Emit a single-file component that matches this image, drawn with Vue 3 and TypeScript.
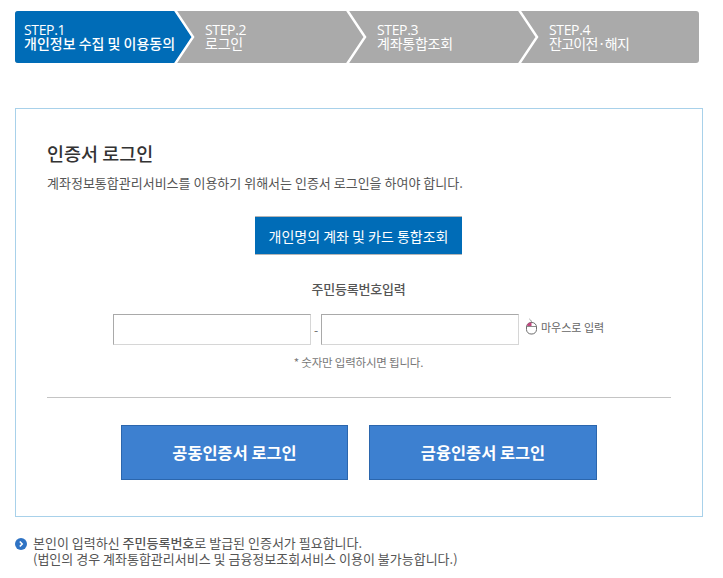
<script setup lang="ts">
interface Step { no: string; label: string; active?: boolean }
const steps: Step[] = [
  { no: 'STEP.1', label: '개인정보 수집 및 이용동의', active: true },
  { no: 'STEP.2', label: '로그인' },
  { no: 'STEP.3', label: '계좌통합조회' },
  { no: 'STEP.4', label: '잔고이전·해지' },
]
</script>

<template>
  <div class="page">
    <div class="steps">
      <div v-for="(s, i) in steps" :key="s.no" class="step" :class="{ active: s.active, first: i === 0, last: i === 3 }">
        <span class="no">{{ s.no }}</span>
        <span class="label">{{ s.label }}</span>
        <svg v-if="i < 3" class="chev" width="20" height="52" viewBox="0 0 20 52">
          <polygon points="0,0 18,26 0,52" :fill="s.active ? '#006cb7' : '#aaaaaa'" />
          <polyline points="0,-1 18,26 0,53" fill="none" stroke="#fff" stroke-width="2.5" />
        </svg>
      </div>
    </div>

    <section class="card">
      <h1 class="title">인증서 로그인</h1>
      <p class="desc">계좌정보통합관리서비스를 이용하기 위해서는 인증서 로그인을 하여야 합니다.</p>
      <div class="center">
        <button type="button" class="personal">개인명의 계좌 및 카드 통합조회</button>
      </div>
      <div class="rrn-title">주민등록번호입력</div>
      <div class="rrn">
        <input class="field" type="text" aria-label="주민등록번호 앞자리" />
        <span class="dash">-</span>
        <input class="field" type="password" aria-label="주민등록번호 뒷자리" />
        <span class="mouse">
          <svg width="13" height="17" viewBox="0 0 13 17">
            <rect x="1.5" y="4.5" width="10" height="11.5" rx="4.5" fill="#fff" stroke="#6e6e6e" />
            <path d="M2 8.5h9" stroke="#6e6e6e" stroke-width="0.8" fill="none" />
            <path d="M2.2 8V7a4 3 0 0 1 4.3-2.5V8z" fill="#c0487f" />
            <path d="M6.5 4.5C6.5 2.8 5.5 2 4.5 1" stroke="#6e6e6e" stroke-width="0.8" fill="none" />
          </svg>
          <span>마우스로 입력</span>
        </span>
      </div>
      <p class="hint">* 숫자만 입력하시면 됩니다.</p>
      <hr class="divider" />
      <div class="actions">
        <button type="button" class="login">공동인증서 로그인</button>
        <button type="button" class="login">금융인증서 로그인</button>
      </div>
    </section>

    <div class="note">
      <svg class="bullet" width="12" height="12" viewBox="0 0 12 12">
        <circle cx="6" cy="6" r="6" fill="#2f73c4" />
        <path d="M4.8 3.5 7.2 6 4.8 8.5" fill="none" stroke="#fff" stroke-width="1.6" />
      </svg>
      <p>본인이 입력하신 <b>주민등록번호</b>로 발급된 인증서가 필요합니다.<br />(법인의 경우 계좌통합관리서비스 및 금융정보조회서비스 이용이 불가능합니다.)</p>
    </div>
  </div>
</template>

<style>
html, body { background: #fff; }
</style>

<style scoped>
.page {
  width: 723px;
  height: 578px;
  overflow: hidden;
  box-sizing: border-box;
  padding: 11px 20px 0 15px;
  font-family: "Noto Sans CJK KR", "Noto Sans", sans-serif;
  color: #444;
}
.steps {
  display: flex;
  width: 684px;
  height: 52px;
  background: #aaaaaa;
  border-radius: 3px;
  overflow: hidden;
}
.step {
  position: relative;
  box-sizing: border-box;
  width: 172px;
  padding: 10px 0 0 30px;
  display: flex;
  flex-direction: column;
  color: #fff;
  font-size: 14px;
  line-height: 15px;
  white-space: nowrap;
}
.step.first { width: 160px; padding-left: 9px; background: #006cb7; }
.step.last { flex: 1; }
.step .no { padding-top: 1px; font-family: "Open Sans", sans-serif; font-weight: 400; font-size: 14px; letter-spacing: -0.35px; }
.step .label { margin-top: -1px; font-weight: 400; letter-spacing: -0.25px; }
.step.active .label { font-weight: 500; letter-spacing: 0; }
.step.last .label { letter-spacing: -0.7px; }
.chev {
  position: absolute;
  top: 0;
  left: 100%;
  overflow: visible;
  z-index: 1;
}
.card {
  box-sizing: border-box;
  width: 688px;
  height: 409px;
  margin-top: 45px;
  border: 1px solid #a8d1ea;
  padding: 31px 31px 0;
}
.title {
  margin: 0;
  font-size: 18.5px;
  line-height: 26px;
  font-weight: 500;
  color: #333;
}
.desc {
  margin: 8px 0 0;
  font-size: 13px;
  line-height: 18px;
  color: #555;
  white-space: nowrap;
}
.center { display: flex; justify-content: center; margin: 24px 0 0 -1px; }
.personal {
  box-sizing: border-box;
  width: 207px;
  height: 39px;
  border: 0;
  border-top: 1px solid #b5b5b5;
  border-bottom: 1px solid #b5b5b5;
  background: #006cb7;
  color: #fff;
  font: 400 14px/1 "Noto Sans CJK KR", sans-serif;
  padding: 0;
}
.rrn-title {
  margin: 25px 0 0 -1px;
  text-align: center;
  font-size: 13px;
  line-height: 18px;
  font-weight: 500;
  letter-spacing: -0.2px;
  color: #555;
}
.rrn {
  display: flex;
  align-items: center;
  margin: 16px 0 0 66px;
  height: 31px;
}
.field {
  box-sizing: border-box;
  width: 198px;
  height: 31px;
  padding: 0 4px;
  border: 1px solid;
  border-color: #a9a9a9 #d6d6d6 #d6d6d6 #a9a9a9;
  background: #fff;
  outline: none;
}
.dash { width: 10px; text-align: center; font-size: 12px; color: #666; }
.mouse {
  display: inline-flex;
  align-items: center;
  gap: 3px;
  margin: -6px 0 0 6px;
  font-size: 11px;
  color: #666;
  white-space: nowrap;
}
.hint {
  margin: 8px 0 0 -1px;
  text-align: center;
  font-size: 11.5px;
  line-height: 18px;
  letter-spacing: -0.2px;
  color: #777;
}
.divider {
  margin: 26px 0 0;
  height: 1px;
  border: 0;
  background: #c4c4c4;
}
.actions {
  display: flex;
  gap: 21px;
  margin: 27px 0 0 74px;
}
.login {
  box-sizing: border-box;
  height: 55px;
  width: 227px;
  border: 1px solid #2b66ad;
  background: #3d80d0;
  color: #fff;
  font: 700 16.4px/1 "Noto Sans CJK KR", sans-serif;
  padding: 0;
}
.login + .login { width: 228px; }
.note {
  display: flex;
  gap: 6px;
  margin-top: 18px;
  font-size: 13px;
  line-height: 16px;
  color: #555;
}
.note p { margin: 0; white-space: nowrap; }
.note b { font-weight: 500; }
.bullet { margin-top: 3px; flex: none; }
</style>
